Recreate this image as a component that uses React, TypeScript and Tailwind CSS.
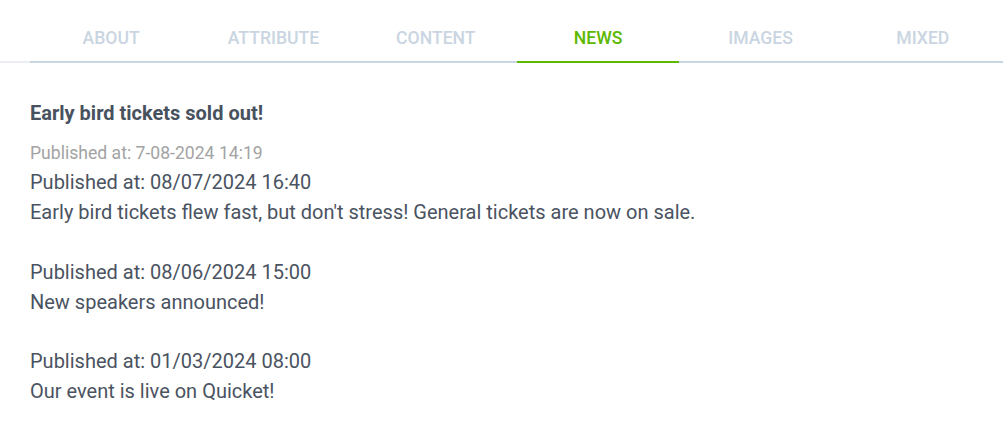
import React, { useState } from 'react';

const tabs = ['About', 'Attribute', 'Content', 'News', 'Images', 'Mixed'];

const news = [
  { date: '08/07/2024 16:40', text: "Early bird tickets flew fast, but don't stress! General tickets are now on sale." },
  { date: '08/06/2024 15:00', text: 'New speakers announced!' },
  { date: '01/03/2024 08:00', text: 'Our event is live on Quicket!' },
];

const App: React.FC = () => {
  const [active, setActive] = useState('News');

  return (
    <div className="min-h-screen bg-white font-['Roboto',sans-serif] text-[#4a5361]">
      <div className="flex border-b-2 border-[#eceef3] pl-[30px]">
        <div className="-mb-[2px] flex w-[974px] shrink-0 border-b-2 border-slate-300">
          {tabs.map((tab) => (
            <button
              key={tab}
              onClick={() => setActive(tab)}
              className={`-mb-[2px] flex h-[63px] flex-1 justify-center border-b-2 pt-[26px] text-[17.6px] font-medium uppercase leading-[24px] ${
                active === tab ? 'border-[#5cb800] text-[#5cb800]' : 'border-transparent text-slate-300'
              }`}
            >
              {tab}
            </button>
          ))}
        </div>
      </div>

      <main className="px-[30px] pt-[36px]">
        <h2 className="text-[20px] font-bold leading-[28px] text-[#48525e]">Early bird tickets sold out!</h2>
        <p className="mt-[13px] text-[17.6px] leading-[26px] text-[#a3a3a3]">Published at: 7-08-2024 14:19</p>
        <div className="mt-[1px] text-[20px] leading-[30px]">
          {news.map((item, i) => (
            <div key={item.date} className={i > 0 ? 'mt-[29.5px]' : ''}>
              <p>Published at: {item.date}</p>
              <p>{item.text}</p>
            </div>
          ))}
        </div>
      </main>
    </div>
  );
};

export default App;
